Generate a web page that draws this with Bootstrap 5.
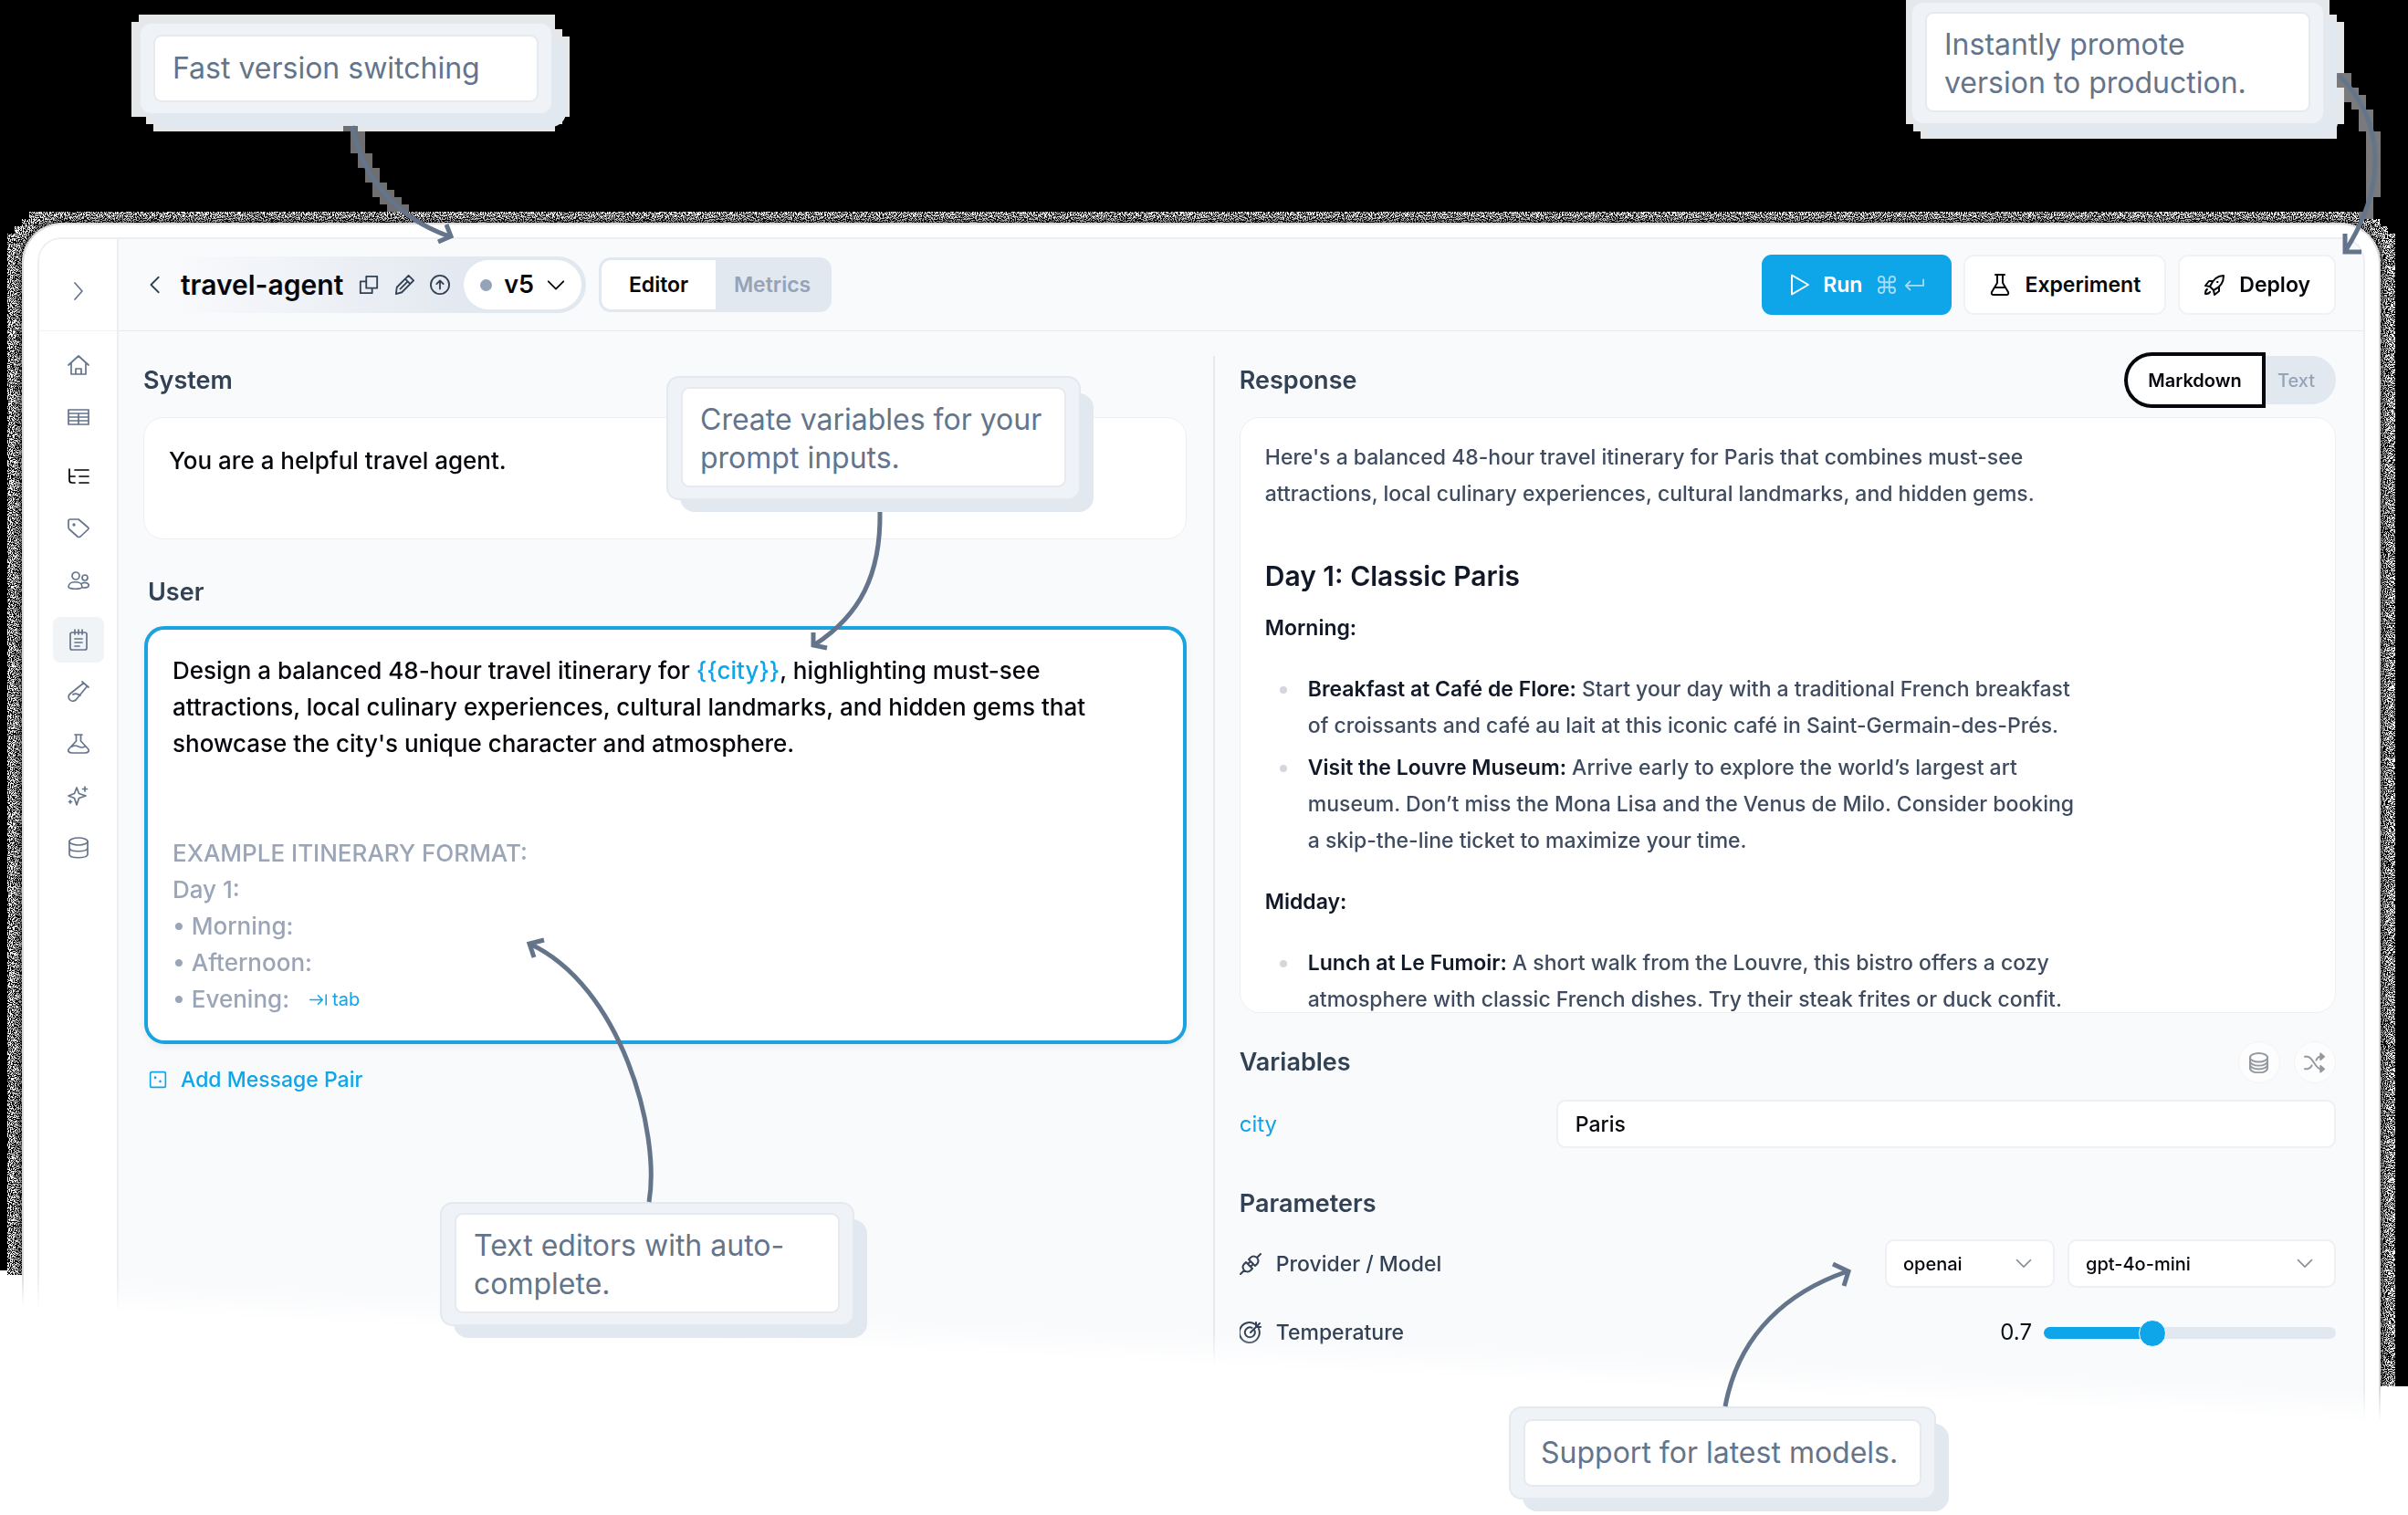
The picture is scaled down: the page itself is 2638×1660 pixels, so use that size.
<!DOCTYPE html>
<html lang="en">
<head>
<meta charset="utf-8">
<meta name="viewport" content="width=device-width, initial-scale=1">
<title>travel-agent · Prompt editor</title>
<link href="https://cdn.jsdelivr.net/npm/bootstrap@5.3.0/dist/css/bootstrap.min.css" rel="stylesheet">
<style>
:root{--ink:#0b0f19;--slate:#64748b;--head:#334155;--mist:#e2e8f0;--sky:#0ea5e9;--line:#eceef2;--wash:#f9fafc;--fade:linear-gradient(182.8deg,#000 82.8%,transparent 85.2%)}
body{font-family:Inter,"Liberation Sans",sans-serif;font-size:24px;line-height:40px;color:var(--ink);background:#fff}
button,input,select,textarea{font-family:inherit}
svg.ico{width:24px;height:24px;fill:none;stroke:currentColor;stroke-width:2;stroke-linecap:round;stroke-linejoin:round;flex:none}
.stage{min-height:100vh;padding:244px 30px 0 24px;background:linear-gradient(#000,#000) 0 0/50% 1392px no-repeat,linear-gradient(#000,#000) 100% 0/50% 1519px no-repeat;overflow:hidden}
/* speckled halo round the window */
.halo{inset:0;clip-path:polygon(32px 232px,calc(100% - 54px) 232px,calc(100% - 54px) 240px,calc(100% - 30px) 240px,calc(100% - 30px) 248px,calc(100% - 22px) 248px,calc(100% - 22px) 256px,calc(100% - 14px) 256px,calc(100% - 14px) 1519px,50% 1519px,50% 1397px,8px 1397px,8px 256px,16px 256px,16px 248px,24px 248px,24px 240px,32px 240px)}
.halo i{position:absolute;inset:230px 0 140px 0;filter:url(#grain);background:#888}
.halo b{position:absolute;inset:244px 30px 0 24px;border-radius:44px 44px 0 0;box-shadow:0 0 8px 2px rgba(0,0,0,.8)}
.win{min-height:calc(100vh - 244px);background:#fff;border-radius:44px 44px 0 0;padding:16px 17px 0}
.win::before{content:"";position:absolute;inset:0;border:2px solid #dadade;border-bottom:0;border-radius:44px 44px 0 0;-webkit-mask-image:var(--fade);mask-image:var(--fade)}
.app{min-height:calc(100vh - 260px);border:2px solid var(--line);border-bottom:0;border-radius:26px 26px 0 0;background:var(--wash);overflow:hidden;-webkit-mask-image:var(--fade);mask-image:var(--fade)}
.rail{width:87px;background:#fff;border-right:2px solid var(--line);color:var(--slate)}
.rail svg.ico{stroke-width:1.7}
.rail-top{height:101px;border-bottom:1px solid #f1f2f5;padding-top:14px}
.rail a{width:56px;height:50px;border-radius:8px;color:inherit}
.rail a.on{background:#f1f4f7}
.rail nav{gap:7px;padding-top:12px}
.rail nav a.grp{margin-top:8px}
.bar{height:101px;border-bottom:1px solid #e8eaee;padding:0 30px 0 29px}
.bar button{line-height:32px}
.crumb{height:62px;border-radius:31px;background:linear-gradient(90deg,rgba(226,232,240,0) 5%,#e2e8f0 75%);padding:4px 5px 4px 0;gap:17px;color:var(--head)}
.crumb svg.ico{width:22px;height:22px}
.crumb h1{font-size:30px;line-height:40px;font-weight:600;color:#05070c;margin:0}
.crumb button,.plain{border:0;background:none;padding:0;color:inherit;display:flex}
.crumb .ver{height:54px;border-radius:27px;background:#fff;padding:0 17px 0 18px;gap:13px;font-size:27px;font-weight:600;color:#05070c;align-items:center;margin-left:-2px}
.dot{width:13px;height:13px;border-radius:50%;background:#94a3b8}
.tabs{height:60px;border:3px solid var(--mist);border-radius:13px;background:var(--mist);overflow:hidden;margin-left:14px}
.tabs button{border:0;font-size:23px;font-weight:600;background:none;color:#94a3b8;width:124px;padding:0}
.tabs button.on{background:#fff;color:#05070c;width:125px}
.acts{gap:13px}
.act{height:66px;border:2px solid #f1f2f5;border-radius:11px;background:#fff;font-size:23px;font-weight:600;padding:0 26px;gap:15px;color:#05070c}
.act.run{background:var(--sky);border-color:var(--sky);color:#fff;padding:0 28px;gap:13px}
.keys{color:#a5dcf7;gap:8px;margin-left:3px}
.keys svg.ico{width:22px;height:22px}
.pane-l{width:48.75%;padding:27px 29px 0 27px}
.pane-r{width:51.25%;margin-top:27px;border-left:2px solid #e6e9ee;padding:0 30px 60px 27px}
.sect{font-size:27px;font-weight:600;color:var(--head);line-height:40px;margin:0}
.sect-row{min-height:53px}
.box{background:#fff;border:1px solid #eceef2;border-radius:22px}
.sys{height:134px;margin-top:14px;padding:27px;font-size:26px;font-weight:500;line-height:40px;color:#05070c;resize:none;display:block}
.usr-head{margin:31px 0 11px;padding-left:5px}
.usr{border:4px solid #1aa3df;padding:25px 27px;font-size:26px;font-weight:500;line-height:40px;color:#05070c;margin-left:1px;box-shadow:0 3px 8px rgba(15,23,42,.06)}
.usr:focus{outline:0}
.usr .cue{color:#9aa5b8}
.usr .var{color:var(--sky)}
.tab-hint{font-size:20px;color:var(--sky);margin-left:22px;gap:6px;vertical-align:top;border:0;background:none;padding:0}
.tab-hint svg.ico{width:19px;height:19px}
.add{margin-top:19px;font-size:23px;font-weight:500;color:var(--sky);gap:15px;padding:0 0 0 6px;text-decoration:none}
.add svg.ico{width:20px;height:20px}
.seg{height:53px}
.seg button{border:0;font-size:20px;font-weight:500;line-height:28px;background:var(--mist);color:#94a3b8;padding:0}
.seg .on{background:#fff;color:#05070c;border-radius:27px 0 0 27px;box-shadow:0 0 0 4px #05070c;width:147px;font-weight:600;z-index:1;position:relative}
.seg .off{border-radius:0 27px 27px 0;width:81px;padding-right:6px}
.resp{height:653px;margin-top:14px;overflow:hidden;padding:23px 27px 0;color:#3f4b5f;font-size:23px;font-weight:500;line-height:40px}
.resp .prose{max-width:901px}
.resp h2{font-size:30px;line-height:40px;font-weight:600;color:#111827;margin:50px 0 17px}
.resp b{font-weight:600;color:#111827}
.resp p{margin:0}
.resp ul{list-style:none;margin:27px 0;padding:0 0 0 47px}
.resp li{position:relative;margin-bottom:6px}
.resp li::before{content:"";position:absolute;left:-31px;top:17px;width:8px;height:8px;border-radius:50%;background:#d4d7dd}
.vars-head{margin-top:31px}
.duo{gap:15px}
.round-btn{width:46px;height:46px;border-radius:50%;border:1px solid #f1f2f4;background:#fdfdfe;color:#94989f;padding:0}
.round-btn svg.ico{width:23px;height:23px}
.city-row{margin-top:18px}
.fld,.pick{height:53px;border:2px solid #eff0f3;border-radius:10px;background-color:#fff;color:#05070c}
.fld{font-size:23px;font-weight:500;padding:0 19px}
.var-name{width:347px;color:var(--sky)}
.params-head{margin-top:41px}
.prov-row{margin-top:19px}
.pick{font-size:20px;font-weight:500;padding:0 50px 0 18px;line-height:30px;appearance:none;width:100%}
.pick-wrap{width:186px}
.pick-wrap.wide{width:294px;margin-left:14px}
.pick-wrap svg.ico{right:24px;top:16px;width:20px;height:20px;color:#8a8f98;pointer-events:none}
.temp-row{margin-top:29px}
.lbl{font-size:23px;font-weight:500;color:var(--head);gap:16px}
.slide{width:320px;height:28px;appearance:none;background:none;margin:0 0 0 13px}
.slide::-webkit-slider-runnable-track{height:13px;border-radius:7px;background:linear-gradient(90deg,var(--sky) 36%,var(--mist) 36%)}
.slide::-webkit-slider-thumb{appearance:none;width:30px;height:30px;border-radius:50%;background:var(--sky);border:1px solid #fff;margin-top:-8px}
/* callouts float over the window */
.note{z-index:5}
.plate{background:#eff3f8;border:2px solid #e4e9f0;border-radius:14px;padding:10px 14px 12px;position:relative}
.plate.short{padding:12px 14px}
.note::before{content:"";position:absolute;left:15px;top:19px;right:-14px;bottom:-13px;background:var(--mist);border-radius:16px}
.note p{margin:0;background:#fff;border:2px solid #e6e9ee;border-radius:9px;padding:13px 19px 9px;font-size:32px;line-height:42px;color:var(--slate);width:422px}
.note .short p{padding:14px 19px}
.note.n4 p{width:436px;padding:14px 17px}
.n1{left:152px;top:24px}.n2{left:730px;top:412px}.n3{left:482px;top:1317px}.n4{left:1653px;top:1541px}.n5{right:91px;top:1px}
.step{background:#e6e7e9;z-index:4}
.step-a{left:144px;top:16px;width:480px;height:128px;clip-path:polygon(8px 0,464px 0,464px 16px,472px 16px,472px 24px,480px 24px,480px 112px,472px 112px,472px 120px,464px 120px,464px 128px,24px 128px,24px 120px,16px 120px,16px 112px,0 112px,0 8px,8px 8px)}
.step-b{right:70px;top:0;width:480px;height:152px;clip-path:polygon(0 0,464px 0,464px 16px,472px 16px,472px 24px,480px 24px,480px 136px,472px 136px,472px 152px,16px 152px,16px 144px,8px 144px,8px 136px,0 136px)}
.wires{inset:0 auto auto 0;width:2638px;height:1660px;z-index:6;pointer-events:none;fill:none;stroke:#64748b;stroke-width:5}
</style>
</head>
<body>
<svg width="0" height="0" class="position-absolute" aria-hidden="true">
<filter id="grain" x="0" y="0" width="100%" height="100%" color-interpolation-filters="sRGB"><feTurbulence type="fractalNoise" baseFrequency="0.95" numOctaves="1" seed="4"/><feColorMatrix values="20 0 0 0 -9.500  20 0 0 0 -9.500  20 0 0 0 -9.500  0 0 0 0 1"/></filter>
<symbol id="i-right" viewBox="0 0 24 24"><path d="M8 3l8 9-8 9"/></symbol>
<symbol id="i-left" viewBox="0 0 24 24"><path d="M16 3l-9 9 9 9"/></symbol>
<symbol id="i-down" viewBox="0 0 24 24"><path d="M3 8l9 9 9-9"/></symbol>
<symbol id="i-home" viewBox="0 0 24 24"><path d="M1 12L12 2l11 10M4 10v12h16V10M9 22v-6h6v6"/></symbol>
<symbol id="i-table" viewBox="0 0 24 24"><path d="M1 4h22v16H1zM1 8h22M1 12h22M1 16h22M12 8v12"/></symbol>
<symbol id="i-tree" viewBox="0 0 24 24"><path d="M8 5h15M13 12h10M13 19h10M2 4v12q0 3 3 3h3M2 12h6"/></symbol>
<symbol id="i-tag" viewBox="0 0 24 24"><path d="M1 4q0-2 2-2h9l10.500 9q1 1 0 2L14 21q-1.500 1-3 0L2 13q-1-1-1-2z"/><circle cx="7" cy="8" r=".8" fill="currentColor"/></symbol>
<symbol id="i-users" viewBox="0 0 24 24"><circle cx="9" cy="7" r="4"/><circle cx="19" cy="9" r="3"/><path d="M1 19c0-7 15-7 15 0 0 3-15 3-15 0zM16 15c4-2 8 1 7 3 0 2-3 2-6 2"/></symbol>
<symbol id="i-list" viewBox="0 0 24 24"><rect x="3" y="4" width="18" height="19" rx="2"/><path d="M8 1v5M12 1v5M16 1v5M8 11h8M8 15h8M8 19h5"/></symbol>
<symbol id="i-tube" viewBox="0 0 24 24"><path d="M16 1l7 6M17.500 2.500L3 14c-5 4 1 11 6 7L21 6.500M6 15q3-2 8 1"/></symbol>
<symbol id="i-flask" viewBox="0 0 24 24"><path d="M8 2h8M9.500 2v7L2 17c-3 3 0 5 3 5h14c3 0 6-2 3-5l-7.500-8V2M5 15q3-2 7 0t7 0"/></symbol>
<symbol id="i-spark" viewBox="0 0 24 24"><path d="M10 3l2.500 6.500L20 12l-7.500 2.500L10 22l-2.500-7.500L1 12l6.500-2.500zM19 2v5M16.500 4.500h5M3 17v3M1.500 18.500h3"/></symbol>
<symbol id="i-db" viewBox="0 0 24 24"><ellipse cx="12" cy="5" rx="10" ry="4"/><path d="M2 5v14c0 5 20 5 20 0V5M2 12c0 5 20 5 20 0"/></symbol>
<symbol id="i-db3" viewBox="0 0 24 24"><ellipse cx="12" cy="6" rx="10" ry="5"/><path d="M2 6v12c0 7 20 7 20 0V6M2 10c0 7 20 7 20 0M2 14c0 7 20 7 20 0"/></symbol>
<symbol id="i-copy" viewBox="0 0 24 24"><path d="M9 2h13v14H9zM9 8H2v14h14v-6"/></symbol>
<symbol id="i-pen" viewBox="0 0 24 24"><path d="M17 1l6 6L9 21l-7 2 1-8zM13 5l6 6M16 8L7 17"/></symbol>
<symbol id="i-up" viewBox="0 0 24 24"><circle cx="12" cy="12" r="11"/><path d="M12 17V7M8 11l4-4 4 4"/></symbol>
<symbol id="i-play" viewBox="0 0 24 24"><path d="M3 1.500v21L21 12z"/></symbol>
<symbol id="i-cmd" viewBox="0 0 24 24"><path d="M9 9h6v6H9zM9 9V5a3.500 3.500 0 1 0-4 4zM15 9h4a3.500 3.500 0 1 0-4-4zM15 15v4a3.500 3.500 0 1 0 4-4zM9 15H5a3.500 3.500 0 1 0 4 4z"/></symbol>
<symbol id="i-ret" viewBox="0 0 24 24"><path d="M23 6v7H2M7 8l-5 5 5 5"/></symbol>
<symbol id="i-exp" viewBox="0 0 24 24"><path d="M7 1h10M9 1v9L3 20q-1 3 2 3h14q3 0 2-3L15 10V1M6 15h12"/></symbol>
<symbol id="i-rocket" viewBox="0 0 24 24"><path d="M22 2c-7 0-12 5-15 12l4 4c7-3 11-8 11-16zM10 8H6l-4 5 5 1M17 14v5l-5 4-1-5M4 17c-2 1-2 4-2 5 2 0 4 0 5-2M15 9h.5"/></symbol>
<symbol id="i-tab" viewBox="0 0 24 24"><path d="M1 12h17M12 6l6 6-6 6M23 5v14"/></symbol>
<symbol id="i-dice" viewBox="0 0 24 24"><rect x="2" y="2" width="20" height="20" rx="2"/><path d="M8.500 9v.5M15 14v.5" stroke-width="3"/></symbol>
<symbol id="i-shuf" viewBox="0 0 24 24"><path d="M1 5h3c6 0 9 14 15 14h3M1 19h3c2 0 4-2 5-4M14 9c1-2 3-4 5-4h3"/><path d="M19 1.500l4 3.500-4 3.500zM19 15.500l4 3.500-4 3.500z" fill="currentColor"/></symbol>
<symbol id="i-plug" viewBox="0 0 24 24"><path d="M1 23l4-4M5 19q-3-4 0-7l2-2 7 7-2 2q-3 3-7 0M9 12l3-3M12 15l3-3M23 1l-4 4M19 5q3 4 0 7l-2 2-7-7 2-2q3-3 7 0"/></symbol>
<symbol id="i-goal" viewBox="0 0 24 24"><path d="M21 8a11 11 0 1 1-4-5M16.500 10a5.500 5.500 0 1 1-3-3.200M12 12L22 2M18 1v5h5"/></symbol>
</svg>

<div class="stage position-relative">
  <div class="halo position-absolute"><i></i><b></b></div>

  <div class="win position-relative">
    <div class="app d-flex position-relative">
      <aside class="rail d-flex flex-column flex-shrink-0">
        <div class="rail-top d-flex align-items-center justify-content-center"><button class="plain" aria-label="Expand"><svg class="ico"><use href="#i-right"/></svg></button></div>
        <nav class="d-flex flex-column align-items-center">
          <a href="#" class="d-flex align-items-center justify-content-center" aria-label="Home"><svg class="ico"><use href="#i-home"/></svg></a>
          <a href="#" class="d-flex align-items-center justify-content-center" aria-label="Table"><svg class="ico"><use href="#i-table"/></svg></a>
          <a href="#" class="grp d-flex align-items-center justify-content-center text-black" aria-label="Traces"><svg class="ico"><use href="#i-tree"/></svg></a>
          <a href="#" class="d-flex align-items-center justify-content-center" aria-label="Tags"><svg class="ico"><use href="#i-tag"/></svg></a>
          <a href="#" class="d-flex align-items-center justify-content-center" aria-label="Users"><svg class="ico"><use href="#i-users"/></svg></a>
          <a href="#" class="grp on d-flex align-items-center justify-content-center" aria-label="Prompts"><svg class="ico"><use href="#i-list"/></svg></a>
          <a href="#" class="d-flex align-items-center justify-content-center" aria-label="Tests"><svg class="ico"><use href="#i-tube"/></svg></a>
          <a href="#" class="d-flex align-items-center justify-content-center" aria-label="Experiments"><svg class="ico"><use href="#i-flask"/></svg></a>
          <a href="#" class="d-flex align-items-center justify-content-center" aria-label="Evaluators"><svg class="ico"><use href="#i-spark"/></svg></a>
          <a href="#" class="d-flex align-items-center justify-content-center" aria-label="Datasets"><svg class="ico"><use href="#i-db"/></svg></a>
        </nav>
      </aside>

      <div class="flex-grow-1 d-flex flex-column">
        <header class="bar d-flex align-items-center">
          <div class="crumb d-flex align-items-center">
            <button aria-label="Back"><svg class="ico"><use href="#i-left"/></svg></button>
            <h1>travel-agent</h1>
            <button aria-label="Copy"><svg class="ico"><use href="#i-copy"/></svg></button>
            <button aria-label="Rename"><svg class="ico"><use href="#i-pen"/></svg></button>
            <button aria-label="Publish"><svg class="ico"><use href="#i-up"/></svg></button>
            <button class="ver"><span class="dot"></span>v5<svg class="ico"><use href="#i-down"/></svg></button>
          </div>
          <div class="tabs d-flex"><button class="on">Editor</button><button>Metrics</button></div>
          <div class="acts ms-auto d-flex">
            <button class="act run d-flex align-items-center"><svg class="ico"><use href="#i-play"/></svg>Run<span class="keys d-flex"><svg class="ico"><use href="#i-cmd"/></svg><svg class="ico"><use href="#i-ret"/></svg></span></button>
            <button class="act d-flex align-items-center"><svg class="ico"><use href="#i-exp"/></svg>Experiment</button>
            <button class="act d-flex align-items-center"><svg class="ico"><use href="#i-rocket"/></svg>Deploy</button>
          </div>
        </header>

        <main class="d-flex flex-grow-1">
          <section class="pane-l">
            <div class="sect-row d-flex align-items-center"><label class="sect" for="sys">System</label></div>
            <textarea id="sys" class="box sys w-100">You are a helpful travel agent.</textarea>
            <div class="sect-row usr-head d-flex align-items-center"><h2 class="sect" id="usr-l">User</h2></div>
            <div class="box usr" role="textbox" aria-multiline="true" aria-labelledby="usr-l" contenteditable="true" spellcheck="false">Design a balanced 48-hour travel itinerary for <span class="var">{{city}}</span>, highlighting must-see<br>attractions, local culinary experiences, cultural landmarks, and hidden gems that<br>showcase the city's unique character and atmosphere.<br><br><br><div class="cue">EXAMPLE ITINERARY FORMAT:<br>Day 1:<br>• Morning:<br>• Afternoon:<br>• Evening:<button class="tab-hint d-inline-flex align-items-center"><svg class="ico"><use href="#i-tab"/></svg>tab</button></div></div>
            <a href="#" class="add d-inline-flex align-items-center"><svg class="ico"><use href="#i-dice"/></svg>Add Message Pair</a>
          </section>

          <section class="pane-r">
            <div class="sect-row d-flex align-items-center justify-content-between"><h2 class="sect">Response</h2><div class="seg d-flex"><button class="on">Markdown</button><button class="off">Text</button></div></div>
            <div class="box resp">
              <div class="prose">
                <p>Here's a balanced 48-hour travel itinerary for Paris that combines must-see attractions, local culinary experiences, cultural landmarks, and hidden gems.</p>
                <h2>Day 1: Classic Paris</h2>
                <p><b>Morning:</b></p>
                <ul>
                  <li><b>Breakfast at Café de Flore:</b> Start your day with a traditional French breakfast of croissants and café au lait at this iconic café in Saint-Germain-des-Prés.</li>
                  <li><b>Visit the Louvre Museum:</b> Arrive early to explore the world’s largest art museum. Don’t miss the Mona Lisa and the Venus de Milo. Consider booking a skip-the-line ticket to maximize your time.</li>
                </ul>
                <p><b>Midday:</b></p>
                <ul>
                  <li><b>Lunch at Le Fumoir:</b> A short walk from the Louvre, this bistro offers a cozy atmosphere with classic French dishes. Try their steak frites or duck confit.</li>
                </ul>
              </div>
            </div>

            <div class="vars-head d-flex align-items-center justify-content-between"><h2 class="sect">Variables</h2>
              <div class="duo d-flex"><button class="round-btn d-flex align-items-center justify-content-center" aria-label="Load from dataset"><svg class="ico"><use href="#i-db3"/></svg></button><button class="round-btn d-flex align-items-center justify-content-center" aria-label="Shuffle"><svg class="ico"><use href="#i-shuf"/></svg></button></div></div>
            <div class="city-row d-flex align-items-center"><label class="var-name flex-shrink-0" for="city">city</label><input id="city" class="fld flex-grow-1" value="Paris"></div>

            <h2 class="sect params-head">Parameters</h2>
            <div class="prov-row d-flex align-items-center"><label class="lbl d-flex align-items-center me-auto" for="prov"><svg class="ico"><use href="#i-plug"/></svg>Provider / Model</label>
              <div class="pick-wrap position-relative"><select id="prov" class="pick"><option>openai</option></select><svg class="ico position-absolute"><use href="#i-down"/></svg></div>
              <div class="pick-wrap wide position-relative"><select class="pick" aria-label="Model"><option>gpt-4o-mini</option></select><svg class="ico position-absolute"><use href="#i-down"/></svg></div></div>
            <div class="temp-row d-flex align-items-center"><label class="lbl d-flex align-items-center me-auto" for="temp"><svg class="ico"><use href="#i-goal"/></svg>Temperature</label><output for="temp">0.7</output><input id="temp" class="slide" type="range" min="0" max="2" step="0.01" value="0.72"></div>
          </section>
        </main>
      </div>
    </div>
  </div>

  <div class="step step-a position-absolute"></div>
  <div class="step step-b position-absolute"></div>
  <div class="note n1 position-absolute"><div class="plate short"><p>Fast version switching</p></div></div>
  <div class="note n2 position-absolute"><div class="plate"><p>Create variables for your prompt inputs.</p></div></div>
  <div class="note n3 position-absolute"><div class="plate"><p>Text editors with auto-complete.</p></div></div>
  <div class="note n4 position-absolute"><div class="plate short"><p>Support for latest models.</p></div></div>
  <div class="note n5 position-absolute"><div class="plate"><p>Instantly promote version to production.</p></div></div>

  <svg class="wires position-absolute" viewBox="0 0 2638 1660" aria-hidden="true">
    <path fill="#6f6e70" stroke="none" d="M376 138h16v6h8v24h8v16h8v16h8v8h8v8h8v8h8v8h-24v-8h-8v-8h-8v-16h-8v-16h-8v-16h-8v-24h-8z"/>
    <path fill="#7a7a7c" stroke="none" d="M2560 80h16v16h8v8h8v16h8v24h8v72h-8v24h-16v-8h8v-88h-8v-24h-8v-8h-8v-16h-8z"/>
    <path d="M386 138C396 190 428 236 492 259M489 246l5 13-14 6"/>
    <path d="M2562 82C2614 134 2614 204 2570 274M2569 256v20h18"/>
    <path d="M964 561C965 630 942 674 893 706M891 693v14l15 3"/>
    <path d="M711 1317C724 1240 680 1080 580 1034M585 1049l-5-15 16-4"/>
    <path d="M1890 1541C1905 1460 1960 1415 2024 1393M2008 1385l17 8-5 16"/>
  </svg>
</div>
<script src="https://cdn.jsdelivr.net/npm/bootstrap@5.3.0/dist/js/bootstrap.bundle.min.js"></script>
</body>
</html>
